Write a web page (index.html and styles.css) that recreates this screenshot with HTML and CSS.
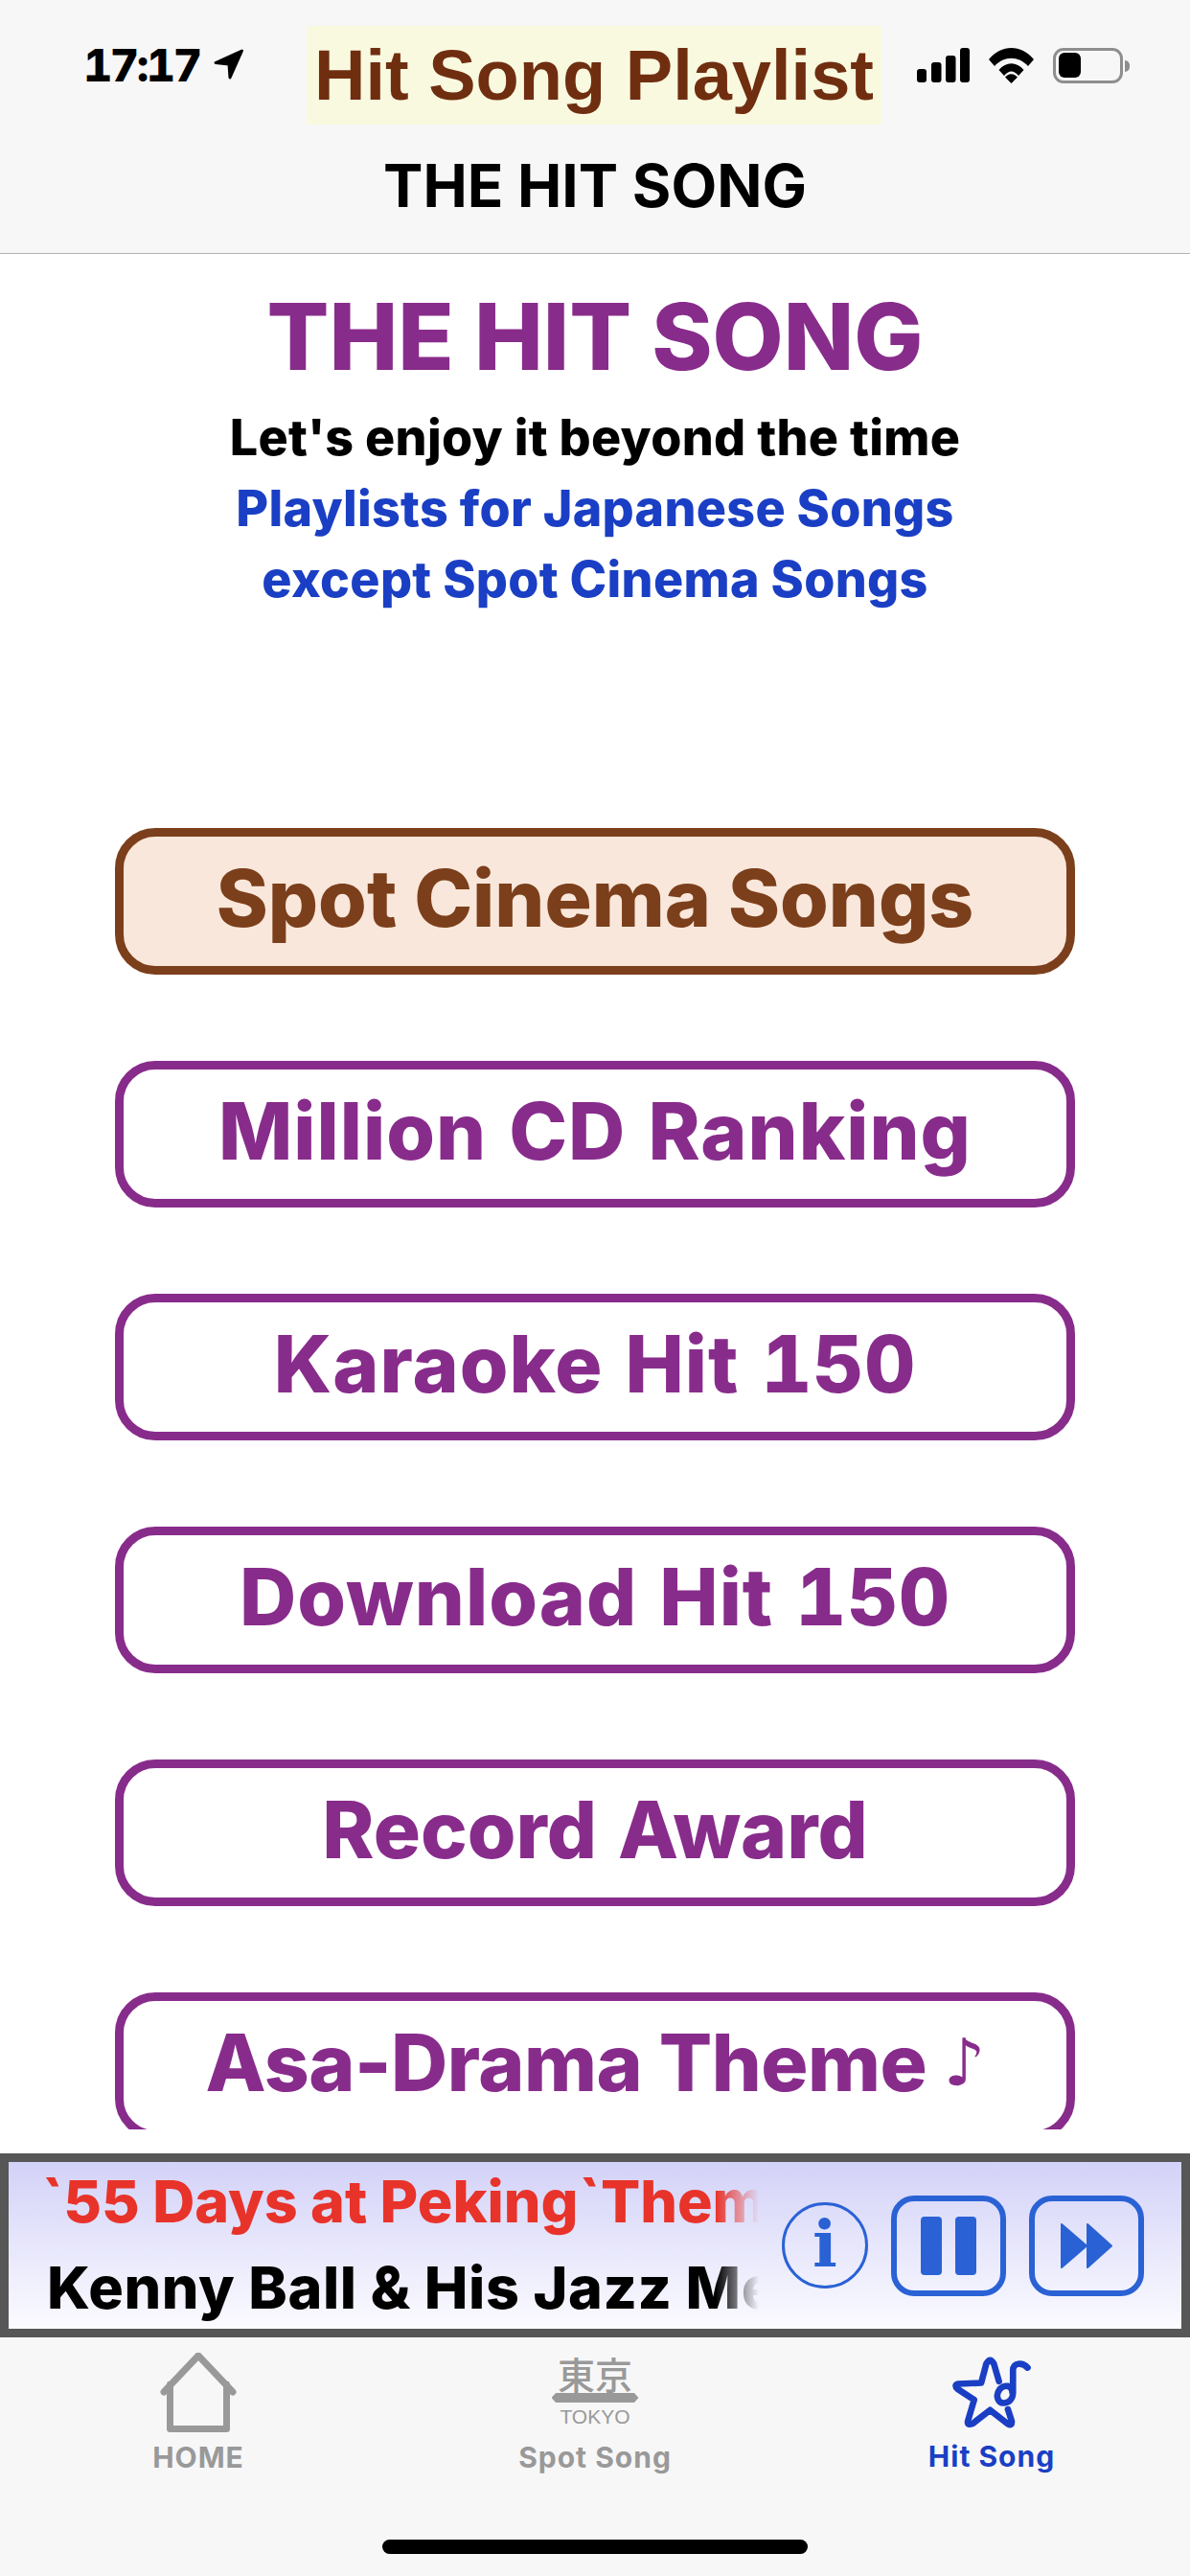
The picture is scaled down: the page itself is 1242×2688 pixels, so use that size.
FILE: index.html
```html
<!DOCTYPE html>
<html lang="en">
<head>
<meta charset="utf-8">
<title>Hit Song Playlist</title>
<link rel="stylesheet" href="styles.css">
</head>
<body>
<div class="app">
  <header class="navbar">
    <div class="status-row">
      <div class="status-left">
        <span class="time">17:17</span>
        <svg class="loc" viewBox="0 0 34 34"><path d="M30.500 3 L3 15.500 L17 17 L18 31 Z" fill="#000" stroke="#000" stroke-width="3" stroke-linejoin="round"/></svg>
      </div>
      <div class="app-title">Hit Song Playlist</div>
      <div class="status-right">
        <svg class="signal" viewBox="0 0 55 36"><rect x="0" y="22" width="10" height="14" rx="3"/><rect x="15" y="15" width="10.500" height="21" rx="3"/><rect x="30" y="8" width="10.500" height="28" rx="3"/><rect x="45" y="0" width="10" height="36" rx="3"/></svg>
        <svg class="wifi" viewBox="0 0 47 37"><path d="M0 12 C13 -4 34 -4 47 12 L41 19 C31 8 16 8 6 19 Z M10.500 23 C18 14 29 14 36.500 23 L31 29 C26 23 21 23 16 29 Z M17 30.500 C21 26 26 26 30 30.500 L23.500 37 Z" fill="#000"/></svg>
        <div class="battery"><div class="battery-fill"></div><div class="battery-nub"></div></div>
      </div>
    </div>
    <div class="nav-title">THE HIT SONG</div>
  </header>

  <main class="content">
    <h1 class="heading">THE HIT SONG</h1>
    <p class="sub sub-black">Let's enjoy it beyond the time</p>
    <p class="sub sub-blue">Playlists for Japanese Songs</p>
    <p class="sub sub-blue">except Spot Cinema Songs</p>
    <div class="buttons">
      <a class="btn btn-spot">Spot Cinema Songs</a>
      <a class="btn btn-tnum btn-wide">Million CD Ranking</a>
      <a class="btn btn-tnum btn-wide">Karaoke Hit 150</a>
      <a class="btn btn-tnum btn-wide">Download Hit 150</a>
      <a class="btn btn-tnum">Record Award</a>
      <a class="btn btn-tight">Asa-Drama Theme <span class="note">♪</span></a>
    </div>
  </main>

  <section class="player">
    <div class="track">
      <div class="track-title">`55 Days at Peking`Theme</div>
      <div class="track-artist">Kenny Ball &amp; His Jazz Men</div>
    </div>
    <div class="info">i</div>
    <div class="ctrl">
      <svg class="ctrl-icon" viewBox="0 0 58 61"><rect x="0" y="0" width="22" height="61" rx="4"/><rect x="36" y="0" width="22" height="61" rx="4"/></svg>
    </div>
    <div class="ctrl">
      <svg class="ctrl-icon next" viewBox="0 0 54 49"><path d="M1 2 L27 24.5 L1 47 Z M28 2 L53 24.5 L28 47 Z" stroke-width="2" stroke-linejoin="round"/></svg>
    </div>
  </section>

  <nav class="tabbar">
    <div class="tab">
      <svg class="tab-icon home" viewBox="0 0 80 84"><path d="M4 41 L40 3 L76 41 M10.5 33 V79.500 H69.500 V33" fill="none" stroke="#999" stroke-width="7" stroke-linecap="round" stroke-linejoin="round"/></svg>
      <span class="tab-label">HOME</span>
    </div>
    <div class="tab">
      <div class="tokyo">
        <span class="kanji">東京</span>
        <span class="tokyo-bar"></span>
        <span class="tokyo-latin">TOKYO</span>
      </div>
      <span class="tab-label">Spot Song</span>
    </div>
    <div class="tab tab-active">
      <svg class="tab-icon star" viewBox="270 70 270 250"><path d="M428 160 L412 105 Q400 82 388 105 L372 165 L300 168 Q285 172 298 184 L350 218 L330 285 Q328 300 345 293 L400 250 L455 293 Q470 302 468 285 L456 248 M470 195 C470 170 445 170 430 185 C415 205 425 230 445 228 C462 226 472 212 472 195 L472 125 C472 102 500 98 518 117" fill="none" stroke="#1a3fc4" stroke-width="20" stroke-linecap="round" stroke-linejoin="round"/></svg>
      <span class="tab-label">Hit Song</span>
    </div>
    <div class="home-indicator"></div>
  </nav>
</div>
</body>
</html>
```

FILE: styles.css
```css
* { box-sizing: border-box; margin: 0; padding: 0; }
html, body { width: 1242px; height: 2688px; overflow: hidden; background: #fff; }

.app { width: 1242px; height: 2688px; display: flex; flex-direction: column; font-family: Inter, sans-serif; }

/* Navigation bar */
.navbar { height: 265px; flex: none; background: #f7f7f7; border-bottom: 1px solid #b2b2b2; padding-top: 27px; }
.status-row { display: flex; align-items: flex-start; height: 103px; }
.status-left { width: 320px; padding: 23px 0 0 87px; display: flex; align-items: center; gap: 13px; }
.time { font: 800 47px/36px Inter, sans-serif; font-variant-numeric: tabular-nums; letter-spacing: -2.5px; color: #000; width: 122px; white-space: nowrap; }
.loc { width: 34px; height: 34px; margin-top: -3px; }
.app-title { width: 600px; height: 103px; background: #f9f9df; color: #702e10; font: 700 74px/103px "Liberation Sans", sans-serif; text-align: center; }
.status-right { padding: 23px 0 0 37px; display: flex; align-items: flex-start; }
.signal { width: 55px; height: 36px; fill: #000; }
.wifi { width: 47px; height: 37px; margin-left: 20px; }
.battery { position: relative; width: 73px; height: 37px; margin-left: 20px; border: 3px solid #8e8e8e; border-radius: 11px; }
.battery-fill { width: 23px; height: 26px; margin: 2px 0 0 3px; background: #000; border-radius: 6px; }
.battery-nub { position: absolute; left: 72px; top: 10px; width: 5px; height: 12px; background: #8e8e8e; border-radius: 0 5px 5px 0; }
.nav-title { font: 700 62px/72px Inter, sans-serif; color: #000; text-align: center; margin-top: 28px; }

/* Main content */
.content { height: 1957px; flex: none; overflow: hidden; background: #fff; text-align: center; padding-top: 48px; }
.heading { font: 800 96px/76px Inter, sans-serif; color: #882c8c; padding-bottom: 31px; }
.sub { font: 800 52px/74px Inter, sans-serif; letter-spacing: 0.3px; }
.sub-black { color: #000; }
.sub-blue { color: #1a3fc4; }
.buttons { display: flex; flex-direction: column; gap: 90px; align-items: center; margin-top: 222px; }
.btn { display: flex; align-items: center; justify-content: center; flex: none; width: 1002px; height: 153px; padding-bottom: 5px; border: 9px solid #882c8c; border-radius: 42px; color: #882c8c; font: 800 82px/1 Inter, sans-serif; background: #fff; white-space: pre; }
.btn-tnum { font-variant-numeric: tabular-nums; }
.btn-wide { letter-spacing: 1px; }
.btn-tight { letter-spacing: -0.5px; }
.btn-spot { border-color: #7c3f1b; background: #f9e7db; color: #7c3f1b; }
.note { font: 400 68px/1 "DejaVu Sans", sans-serif; }

/* Mini player */
.player { height: 192px; flex: none; margin-top: 25px; background: linear-gradient(#d3d2f8, #fbfbff); border: 9px solid #575757; display: flex; align-items: center; padding-left: 34px; }
.track { width: 749px; flex: none; overflow: hidden; white-space: nowrap; margin-top: -3px; -webkit-mask-image: linear-gradient(to right, #000 94%, transparent 100%); mask-image: linear-gradient(to right, #000 94%, transparent 100%); }
.track-title { font: 800 61px/90px Inter, sans-serif; color: #e8332a; }
.track-artist { font: 800 61px/90px Inter, sans-serif; color: #000; padding-left: 6px; letter-spacing: 0.6px; }
.info { width: 90px; height: 90px; flex: none; margin-left: 24px; border: 3px solid #2a62d5; border-radius: 50%; color: #2a62d5; font: 700 68px/80px "DejaVu Serif", serif; text-align: center; }
.ctrl { width: 120px; height: 105px; flex: none; margin-left: 24px; border: 6px solid #2a62d5; border-radius: 24px; display: flex; align-items: center; justify-content: center; }
.ctrl-icon { width: 58px; height: 61px; fill: #2a62d5; stroke: #2a62d5; stroke-width: 0; }
.next { width: 54px; height: 49px; }

/* Tab bar */
.tabbar { position: relative; flex: 1; background: #f7f7f7; display: grid; grid-template-columns: repeat(3, 414px); }
.tab { display: flex; flex-direction: column; align-items: center; padding-top: 16px; }
.tab-icon { display: block; flex: none; }
.home { width: 80px; height: 84px; }
.star { width: 90px; height: 83px; }
.tab-label { font: 700 30px/36px Inter, sans-serif; color: #999; letter-spacing: 1px; margin-top: 7px; }
.tab-active .tab-label { color: #1a3fc4; }
.tokyo { height: 84px; width: 92px; display: flex; flex-direction: column; align-items: center; color: #999; }
.kanji { font: 500 39px/42px "Noto Sans CJK JP", sans-serif; height: 40px; }
.tokyo-bar { width: 91px; height: 10px; background: #999; clip-path: polygon(5% 0, 95% 0, 100% 50%, 95% 100%, 5% 100%, 0 50%); flex: none; margin-top: 2px; }
.tokyo-latin { font: 400 21px/20px "Liberation Sans", sans-serif; margin-top: 5px; }
.home-indicator { position: absolute; left: 399px; top: 211px; width: 444px; height: 15px; border-radius: 8px; background: #000; }
```
